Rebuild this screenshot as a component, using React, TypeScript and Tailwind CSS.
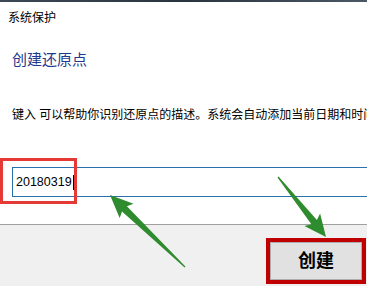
import React from 'react';

type Pt = [number, number];

// builds a tapered arrow polygon from tail to tip
function arrowPoints(tail: Pt, tip: Pt, headLen: number, headHalf: number, neckHalf: number, tailHalf: number) {
  const dx = tip[0] - tail[0];
  const dy = tip[1] - tail[1];
  const len = Math.sqrt(dx * dx + dy * dy);
  const ux = dx / len;
  const uy = dy / len;
  const nx = -uy;
  const ny = ux;
  const neck: Pt = [tip[0] - ux * headLen, tip[1] - uy * headLen];
  const pts: Pt[] = [
    [tail[0] + nx * tailHalf, tail[1] + ny * tailHalf],
    [neck[0] + nx * neckHalf, neck[1] + ny * neckHalf],
    [neck[0] + nx * headHalf - ux * 3, neck[1] + ny * headHalf - uy * 3],
    tip,
    [neck[0] - nx * headHalf - ux * 3, neck[1] - ny * headHalf - uy * 3],
    [neck[0] - nx * neckHalf, neck[1] - ny * neckHalf],
    [tail[0] - nx * tailHalf, tail[1] - ny * tailHalf],
  ];
  return pts.map((p) => `${p[0].toFixed(1)},${p[1].toFixed(1)}`).join(' ');
}

export default function App() {
  const arrowA = arrowPoints([185, 267], [110, 195], 20, 10, 3.5, 0.6);
  const arrowB = arrowPoints([278, 177], [326, 237], 19, 10, 3.5, 0.6);

  return (
    <div
      className="relative w-[367px] h-[286px] overflow-hidden bg-white flex flex-col"
      style={{ fontFamily: '"Liberation Sans", "Noto Sans CJK SC", sans-serif' }}
    >
      {/* top section */}
      <div className="h-[224px] flex flex-col">
        <div className="h-[2px] bg-gradient-to-r from-[#3b4855] via-[#2a3440] to-[#4a5866]" />
        <div className="pl-[8px] pt-[9px] text-[12px] leading-[14px] text-black">系统保护</div>
        <div className="pl-[12px] mt-[26px] text-[15px] leading-[18px] text-[#1f3a8c]">创建还原点</div>
        <div className="pl-[12px] mt-[39px] text-[12px] leading-[14px] text-black whitespace-nowrap">
          键入 可以帮助你识别还原点的描述。系统会自动添加当前日期和时间
        </div>
        <div className="ml-[12px] mt-[45px] w-[420px] h-[30px] shrink-0 border border-[#2a6fb0] bg-white flex items-center pl-[3px]">
          <span className="text-[12.5px] leading-[15px] text-black">20180319</span>
          <span className="inline-block w-[1px] h-[15px] bg-black ml-[1px]" />
        </div>
      </div>

      {/* footer */}
      <div className="flex-1 border-t border-[#a0a0a0] bg-[#f0f0f0] flex justify-end pr-[1px] pt-[13px]">
        <div className="w-[100px] h-[46px] border-4 border-[#c00000] bg-[#c00000]">
          <button className="w-full h-full bg-[#e1e1e1] border border-[#adadad] text-[18px] font-bold text-black leading-none">
            创建
          </button>
        </div>
      </div>

      {/* annotation: red box over input */}
      <div className="absolute left-0 top-[158px] w-[77px] h-[46px] border-[3px] border-[#e53935] pointer-events-none" />

      {/* annotation arrows */}
      <svg className="absolute inset-0 pointer-events-none" width="367" height="286" viewBox="0 0 367 286">
        <polygon points={arrowA} fill="#2e8b2e" />
        <polygon points={arrowB} fill="#2e8b2e" />
      </svg>
    </div>
  );
}
